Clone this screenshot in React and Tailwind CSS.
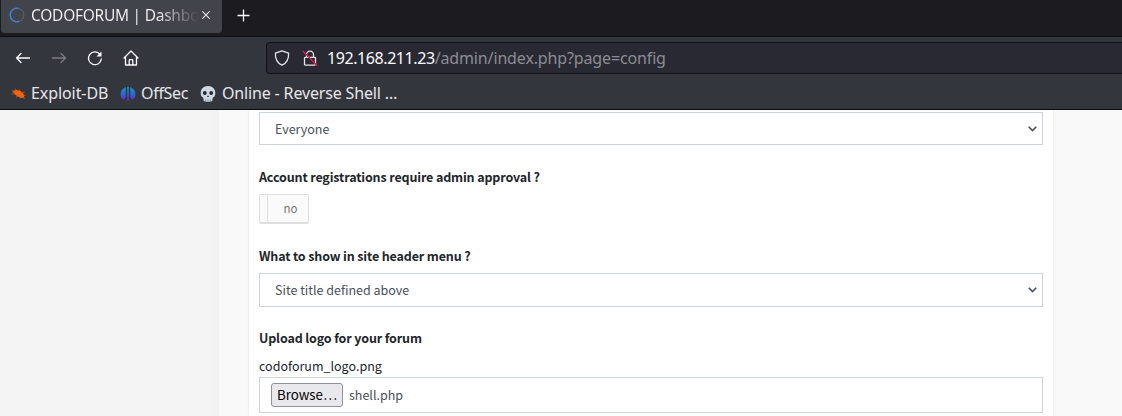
import React from "react";

function Spinner() {
  return (
    <svg className="h-4 w-4 shrink-0" viewBox="0 0 16 16" fill="none">
      <circle cx="8" cy="8" r="6.8" stroke="#5b5d65" strokeWidth="1.2" />
      <path d="M9.5 1.4A6.8 6.8 0 1 0 10 14.5" stroke="#3f7fcc" strokeWidth="1.5" />
    </svg>
  );
}

function NavIcon({ children, className }) {
  return (
    <svg
      className={"h-4 w-4 shrink-0 " + className}
      viewBox="0 0 16 16"
      fill="none"
      stroke="currentColor"
      strokeWidth="1.3"
      strokeLinecap="round"
      strokeLinejoin="round"
    >
      {children}
    </svg>
  );
}

function ExploitIcon() {
  return (
    <svg className="h-4 w-4 shrink-0" viewBox="0 0 16 16">
      <path
        d="M2 5h4M1.500 8l4-.5M5 2.500l2 3M9 3.500l1 2M6 11l3-1M10 12.500l1-2M12 11l3 1.500M12 6.500l3-.5M13 9l2.500.5"
        stroke="#a9501f"
        strokeWidth="1"
        fill="none"
      />
      <path d="M2.500 5.500L6 4l4 .8 3.500 3 .8 4-4-.1-4.800-2.700z" fill="#f2620f" />
    </svg>
  );
}

function OffSecIcon() {
  return (
    <svg className="h-4 w-4 shrink-0" viewBox="0 0 16 16">
      <defs>
        <linearGradient id="offsec" x1="0" y1="0" x2="0" y2="1">
          <stop offset="0" stopColor="#149bbd" />
          <stop offset="0.5" stopColor="#2d69d0" />
          <stop offset="1" stopColor="#6a20cc" />
        </linearGradient>
      </defs>
      <path
        d="M5.800 1v9.500L3.800 14Q.5 11.800.5 8 .5 3.500 5.800 1zM10.200 1v9.500l2 3.500q3.300-2.200 3.300-6 0-4.500-5.300-7zM7.200.7h1.600V15H7.200z"
        fill="url(#offsec)"
      />
    </svg>
  );
}

function SkullIcon() {
  return (
    <svg className="h-4 w-4 shrink-0" viewBox="0 0 16 16">
      <path
        d="M8 0C3.500 0 .7 3 .7 6.800c0 1.800.3 2.900 1 3.900.4.600 1.300.6 1.600 1.200.3.700 0 2.300.6 3 .8 1 7.400 1 8.200 0 .6-.7.3-2.300.6-3 .3-.6 1.200-.6 1.600-1.200.7-1 1-2.100 1-3.900C15.300 3 12.500 0 8 0z"
        fill="#cfd8e0"
      />
      <circle cx="4.800" cy="7" r="1.900" fill="#24262e" />
      <circle cx="11.200" cy="7" r="1.900" fill="#24262e" />
      <path d="M8 9.200l-1 1.700h2z" fill="#24262e" />
      <path d="M5.700 13.500v2M8 13.500v2M10.300 13.500v2" stroke="#6a707a" strokeWidth="0.7" />
    </svg>
  );
}

function TabStrip() {
  return (
    <div className="flex h-[37px] items-start border-b border-[#0e0f13] bg-[#1b1b20]">
      <div className="ml-px flex h-[33px] w-[221px] items-center rounded-b bg-[#42444c] pb-[3px] pl-2">
        <Spinner />
        <div className="ml-1.5 w-[168px] overflow-hidden whitespace-nowrap bg-linear-to-r from-[#f4f4f6] from-75% to-[#42444c] to-100% bg-clip-text text-[15.5px] leading-6 tracking-[-0.26px] text-transparent">
          CODOFORUM | Dashbo
        </div>
        <svg className="ml-[3px] h-2 w-2 shrink-0" viewBox="0 0 8 8" stroke="#e8e8ec" strokeWidth="1.1">
          <path d="M.4.4l7.200 7.200M7.600.4L.4 7.600" />
        </svg>
      </div>
      <svg className="mt-[9px] ml-[15px] h-[13px] w-[13px]" viewBox="0 0 13 13" stroke="#fbfbfe" strokeWidth="1.3">
        <path d="M6.500.5v12M.5 6.500h12" />
      </svg>
    </div>
  );
}

function NavBar() {
  return (
    <div className="flex h-[41px] items-center pl-[15px]">
      <NavIcon className="text-[#fbfbfe]">
        <path d="M14.500 8H1.500M6 3.500L1.500 8l4.500 4.500" />
      </NavIcon>
      <NavIcon className="ml-5 text-[#7c7d84]">
        <path d="M1.500 8h13M10 3.500l4.500 4.500-4.500 4.500" />
      </NavIcon>
      <NavIcon className="ml-5 text-[#fbfbfe]">
        <path d="M14.300 9A6.400 6.400 0 1 1 12.500 3.800" />
        <path d="M14.500 1.500v5H9.500z" fill="currentColor" stroke="none" />
      </NavIcon>
      <NavIcon className="ml-5 text-[#fbfbfe]">
        <path d="M1 8l7-7 7 7M2.500 7v8h11V7M6.200 15v-4.500a.8.800 0 0 1 .8-.8h2a.8.800 0 0 1 .8.800V15" />
      </NavIcon>
      <div className="ml-[127px] flex h-8 flex-1 items-center rounded-l border border-r-0 border-[#111217] bg-[#282933] pl-[7px]">
        <NavIcon className="text-[#e4e4e8]">
          <path d="M8 .8l6.600 2.400c.3 5.800-1.800 9.800-6.600 12-4.800-2.200-6.900-6.200-6.600-12z" />
        </NavIcon>
        <NavIcon className="ml-3 text-[#e4e4e8]">
          <path d="M4.500 7.300V4.700a3.500 3.500 0 0 1 7 0v2.600M3.300 7.300h9.400a.8.800 0 0 1 .8.800v6.200a.8.800 0 0 1-.8.800H3.300a.8.800 0 0 1-.8-.8V8.100a.8.800 0 0 1 .8-.8z" />
          <path d="M1.300 1.500l13.400 13.800" stroke="#e51b4b" strokeWidth="1.5" />
        </NavIcon>
        <span className="ml-[9px] text-[16px] leading-6 tracking-[-0.14px] whitespace-nowrap text-[#8c8d93]">
          <span className="tracking-[-0.42px] text-[#fbfbfe]">192.168.211.23</span>/admin/index.php?page=config
        </span>
      </div>
    </div>
  );
}

function Bookmark({ icon, label, className }) {
  return (
    <div className={"flex items-center gap-[5px] " + className}>
      {icon}
      <span className="-mt-0.5 whitespace-nowrap">{label}</span>
    </div>
  );
}

function Chrome() {
  return (
    <header className="font-['Noto_Sans',sans-serif]">
      <TabStrip />
      <div className="h-[73px] border-b border-[#0c0c0d] bg-[#34363e]">
        <NavBar />
        <div className="flex h-[31px] items-center text-[16px] leading-6 text-[#e6e6e9]">
          <Bookmark className="ml-[10px] w-[99px] tracking-[-0.08px]" icon={<ExploitIcon />} label="Exploit-DB" />
          <Bookmark className="ml-[11px] w-[68px] tracking-[-0.3px]" icon={<OffSecIcon />} label="OffSec" />
          <Bookmark className="ml-[12px] gap-[6px] tracking-[-0.16px]" icon={<SkullIcon />} label="Online - Reverse Shell …" />
        </div>
      </div>
    </header>
  );
}

function Select({ value, className }) {
  return (
    <div className={"flex items-center justify-between border border-[#ced4da] pr-[5px] pl-[15px] text-[#495057] " + className}>
      <span>{value}</span>
      <svg className="h-[6px] w-[9px]" viewBox="0 0 9 6" fill="none" stroke="#495057" strokeWidth="1.6">
        <path d="M.7.8l3.800 3.800L8.300.8" />
      </svg>
    </div>
  );
}

function Label({ children, className }) {
  return <div className={"font-bold tracking-[-0.14px] text-[#212529] " + className}>{children}</div>;
}

export default function App() {
  return (
    <div className="flex h-[416px] w-[1122px] flex-col overflow-hidden">
      <Chrome />
      <main className="flex min-h-0 flex-1 bg-[#f9f9f9] font-['Noto_Sans_CJK_SC',sans-serif] text-[12.5px] leading-5">
        <aside className="w-[219px] bg-linear-to-r from-[#f4f4f4] from-95% to-[#f1f1f1]" />
        <section className="ml-[30px] w-[804px] bg-white px-[10px] pt-[2px] shadow-[0_0_2px_rgba(0,0,0,0.12)]">
          <Select value="Everyone" className="h-[33px]" />
          <Label className="mt-[22px]">Account registrations require admin approval ?</Label>
          <div className="mt-[7px] flex h-[30px] w-[50px] overflow-hidden rounded-[2px] border border-b-2 border-[#dedede] bg-[#fafafa] text-[11.5px] text-[#777]">
            <div className="w-2 border-r border-[#dedede]" />
            <span className="ml-[15.5px] leading-[26px]">no</span>
          </div>
          <Label className="mt-[22px]">What to show in site header menu ?</Label>
          <Select value="Site title defined above" className="mt-[7px] h-[34px]" />
          <Label className="mt-[21px]">Upload logo for your forum</Label>
          <div className="mt-2 text-[#212529]">codoforum_logo.png</div>
          <div className="mt-px flex h-9 items-center border border-[#ced4da] pl-[11px] text-[#495057]">
            <button className="flex h-6 w-[72px] items-center justify-center rounded-[3px] border border-[#8f8f9d] bg-[#e9e9ed] text-[13.3px] leading-5 text-black">
              Browse…
            </button>
            <span className="ml-[6px]">shell.php</span>
          </div>
        </section>
      </main>
    </div>
  );
}
